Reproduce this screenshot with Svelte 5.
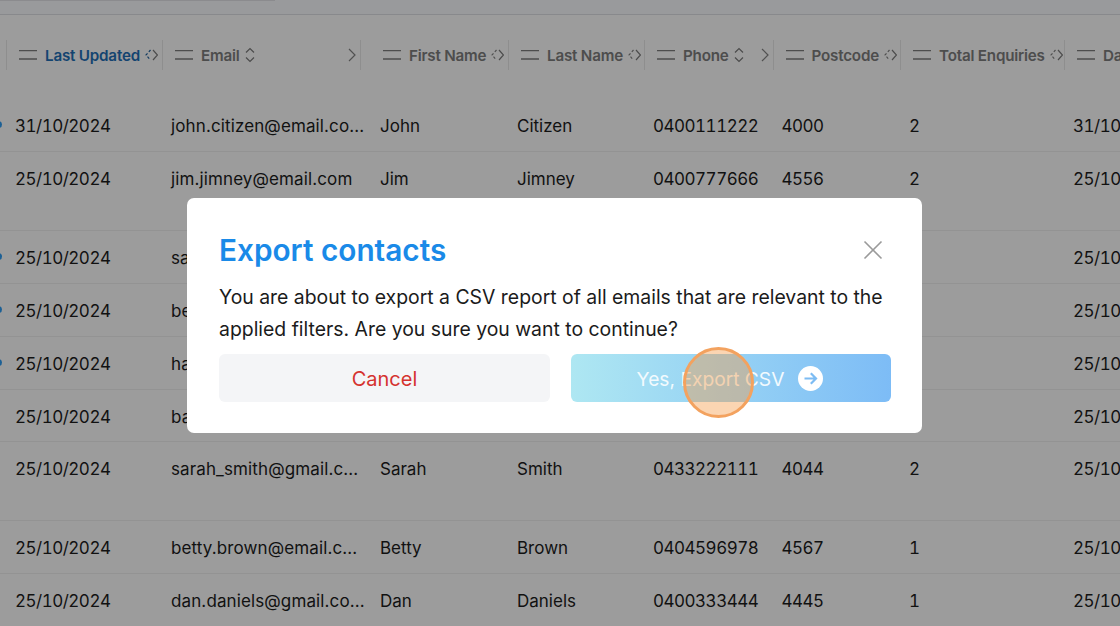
<script lang="ts">
  const columns = [
    { label: "Last Updated", active: true },
    { label: "Email", vertical: true, more: true },
    { label: "First Name" },
    { label: "Last Name" },
    { label: "Phone", vertical: true, more: true },
    { label: "Postcode" },
    { label: "Total Enquiries" },
    { label: "Date Created" }
  ];

  const rows = [
    { dot: true, cells: ["31/10/2024", "john.citizen@email.co...", "John", "Citizen", "0400111222", "4000", "2", "31/10/2024"] },
    { tall: true, cells: ["25/10/2024", "jim.jimney@email.com", "Jim", "Jimney", "0400777666", "4556", "2", "25/10/2024"] },
    { dot: true, cells: ["25/10/2024", "sam.adams@email...", "", "", "", "", "", "25/10/2024"] },
    { dot: true, cells: ["25/10/2024", "ben.jones@email...", "", "", "", "", "", "25/10/2024"] },
    { dot: true, cells: ["25/10/2024", "harry.lee@email...", "", "", "", "", "", "25/10/2024"] },
    { cells: ["25/10/2024", "barry.hall@email...", "", "", "", "", "", "25/10/2024"] },
    { tall: true, cells: ["25/10/2024", "sarah_smith@gmail.c...", "Sarah", "Smith", "0433222111", "4044", "2", "25/10/2024"] },
    { cells: ["25/10/2024", "betty.brown@email.c...", "Betty", "Brown", "0404596978", "4567", "1", "25/10/2024"] },
    { cells: ["25/10/2024", "dan.daniels@gmail.co...", "Dan", "Daniels", "0400333444", "4445", "1", "25/10/2024"] }
  ];

  // dates, phone and postcode use tabular digits in the reference
  const isNumeric = (text: string) => /^[\d/]+$/.test(text);
</script>

<div class="page">
  <div class="topbar"><div class="search"></div></div>

  <div class="table">
    <div class="row head">
      {#each columns as col}
        <div class="th" class:active={col.active}>
          <svg class="grip" width="18" height="10" viewBox="0 0 18 10">
            <path d="M0 .5h18M0 9h18" stroke="currentColor" stroke-width="1.500" />
          </svg>
          <span class="label">{col.label}</span>
          {#if col.vertical}
            <svg class="sort" width="10" height="16" viewBox="0 0 10 16">
              <path d="M1 5.500 5 1.500l4 4M1 10.500l4 4 4-4" fill="none" stroke="#7c7c7c" stroke-width="1.200" />
            </svg>
          {:else}
            <svg class="sort" width="13" height="14" viewBox="0 0 13 14">
              <path d="M5.500 2 1 7l4.500 5" fill="none" stroke={col.active ? "#1d5f9c" : "#838383"} stroke-width="1.200" stroke-dasharray="2.500 2" />
              <path d="M8 2l4.500 5L8 12" fill="none" stroke="#7c7c7c" stroke-width="1.200" />
            </svg>
          {/if}
          {#if col.more}
            <svg class="more" width="8" height="14" viewBox="0 0 8 14">
              <path d="M1 1l6 6-6 6" fill="none" stroke="#858585" stroke-width="1.200" />
            </svg>
          {/if}
        </div>
      {/each}
    </div>

    {#each rows as row}
      <div class="row body" class:tall={row.tall}>
        {#if row.dot}<span class="dot"></span>{/if}
        {#each row.cells as cell}
          <div class="td" class:num={isNumeric(cell)}>{cell}</div>
        {/each}
      </div>
    {/each}
  </div>

  <div class="backdrop"></div>

  <div class="modal">
    <div class="modal-head">
      <h2>Export contacts</h2>
      <svg width="20" height="20" viewBox="0 0 20 20">
        <path d="M1.500 1.500l17 17M18.500 1.500l-17 17" stroke="#9a9a9a" stroke-width="1.600" />
      </svg>
    </div>
    <p>You are about to export a CSV report of all emails that are relevant to the applied filters. Are you sure you want to continue?</p>
    <div class="actions">
      <button class="cancel">Cancel</button>
      <button class="export">
        Yes, Export CSV
        <svg width="25" height="25" viewBox="0 0 25 25">
          <circle cx="12.500" cy="12.500" r="12.500" fill="#fff" />
          <path d="M6.500 12.500h11.500M12.800 7.300l5.200 5.200-5.200 5.200" fill="none" stroke="#7dbcf3" stroke-width="2.200" />
        </svg>
      </button>
    </div>
    <span class="click"></span>
  </div>
</div>

<style>
  :global(body) {
    margin: 0;
    font-family: Inter, "Liberation Sans", sans-serif;
  }

  .page {
    position: relative;
    width: 1120px;
    height: 626px;
    overflow: hidden;
    background: #fff;
  }

  .topbar {
    height: 14px;
    background: #fbfcff;
    border-bottom: 1px solid #dfe1e5;
  }

  .search {
    width: 275px;
    height: 1px;
    background: #e3e4e8;
  }

  .table {
    width: 1300px;
    padding-left: 6px;
  }

  .row {
    display: grid;
    grid-template-columns: 156px 198px 148px 136px 128.500px 127.500px 164px 180px;
    position: relative;
  }

  .head {
    height: 30px;
    margin-top: 25px;
    margin-bottom: 29px;
  }

  .th {
    display: flex;
    align-items: center;
    padding-left: 12px;
    border-left: 1px solid #e9e9e9;
    color: #7e7e7e;
    font-size: 15.200px;
    font-weight: 600;
    letter-spacing: -0.2px;
    white-space: nowrap;
  }

  .th:nth-child(3) {
    padding-left: 22px;
  }

  .th.active {
    color: #1f6fb8;
  }

  .th.active .grip {
    color: #7e7e7e;
  }

  .grip {
    flex: none;
    margin-right: 8px;
  }

  .sort {
    flex: none;
    margin-left: 5px;
  }

  .more {
    flex: none;
    margin-left: auto;
    margin-right: 4px;
  }

  .body {
    height: 51.880px;
    align-items: start;
    border-bottom: 1px solid #f1f1f1;
    margin-left: -6px;
    padding-left: 6px;
  }

  .body.tall {
    height: 78px;
  }

  .td {
    min-width: 0;
    padding: 15px 0 0 9px;
    font-size: 17px;
    line-height: 25px;
    color: #1c1c1c;
    white-space: nowrap;
  }

  .td.num {
    font-variant-numeric: tabular-nums;
    letter-spacing: -0.5px;
  }

  .body .td:nth-of-type(2) {
    letter-spacing: 0.12px;
  }

  .body .td:nth-of-type(3) {
    padding-left: 20px;
  }

  .dot {
    position: absolute;
    left: -5px;
    top: 22px;
    width: 7px;
    height: 7px;
    border-radius: 50%;
    background: #2f9df4;
  }

  .backdrop {
    position: absolute;
    inset: 0;
    background: rgba(0, 0, 0, 0.39);
  }

  .modal {
    position: absolute;
    left: 187px;
    top: 198px;
    box-sizing: border-box;
    width: 735px;
    height: 235px;
    padding: 31px 32px;
    border-radius: 7px;
    background: #fff;
  }

  .modal-head {
    display: flex;
    align-items: center;
    justify-content: space-between;
    height: 42px;
    padding-right: 7.500px;
  }

  h2 {
    margin: 0;
    font-size: 29.750px;
    font-weight: 600;
    color: #1a8ae8;
  }

  p {
    margin: 10px 0 9px;
    font-size: 19.400px;
    line-height: 32px;
    color: #1b1b1b;
  }

  .actions {
    display: grid;
    grid-template-columns: 331px 320px;
    gap: 21px;
  }

  button {
    height: 48px;
    padding: 2px 0 0;
    border: none;
    border-radius: 6px;
    font: inherit;
    font-size: 20px;
  }

  .cancel {
    background: #f4f5f7;
    color: #d5322f;
  }

  .export {
    display: flex;
    align-items: center;
    justify-content: center;
    gap: 14px;
    padding-right: 2px;
    font-size: 19.200px;
    background: linear-gradient(90deg, #aee7f2, #7dbcf6);
    color: #f2fafe;
  }

  .export svg {
    margin-top: -2px;
  }

  .click {
    position: absolute;
    left: 496px;
    top: 149px;
    box-sizing: border-box;
    width: 71px;
    height: 71px;
    border: 3px solid #f3a25f;
    border-radius: 50%;
    background: rgba(245, 149, 63, 0.4);
  }
</style>
